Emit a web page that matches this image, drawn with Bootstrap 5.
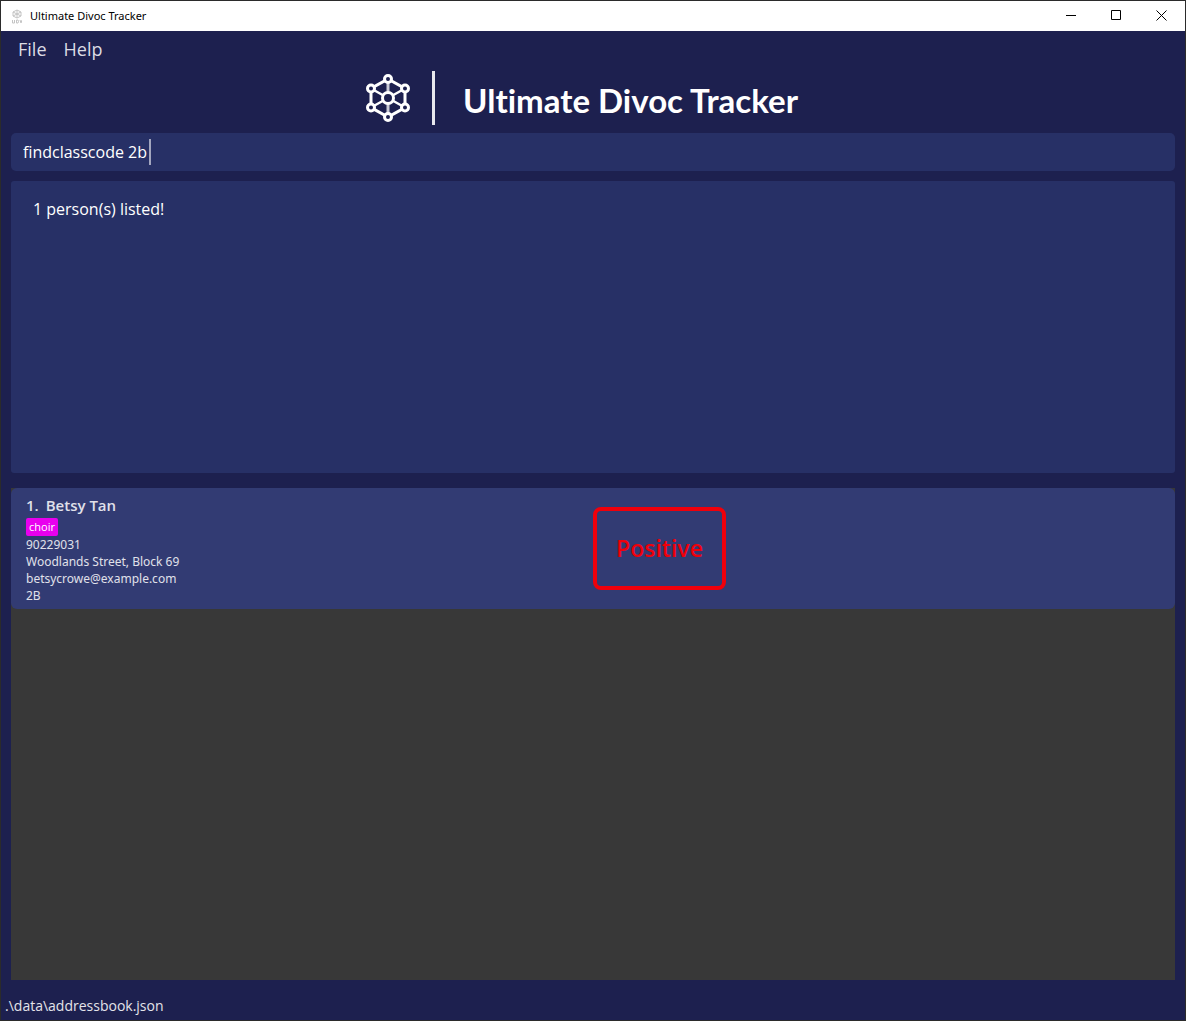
<!DOCTYPE html>
<html lang="en">
<head>
<meta charset="utf-8">
<meta name="viewport" content="width=device-width, initial-scale=1">
<title>Ultimate Divoc Tracker</title>
<link href="https://cdn.jsdelivr.net/npm/bootstrap@5.3.0/dist/css/bootstrap.min.css" rel="stylesheet">
<style>
  body { font-family: "Open Sans", "Noto Sans", sans-serif; background: #1d204f; color: #fff; }
  .app-window { border: 1px solid #2b2b2b; }
  .title-bar { height: 30px; background: #fff; color: #000; }
  .title-bar h1 { font-family: "Noto Sans", sans-serif; font-size: 11px; line-height: 16px; }
  .app-icon { margin: 0 8px 0 11px; }
  .win-btn { width: 45px; height: 30px; border: 0; background: none; padding: 0; }
  .win-btn svg { margin: 0 auto 2px; }
  .win-buttons { padding-right: 1px; }
  .menu-link { font-size: 18px; line-height: 36px; color: #dcdce4; text-decoration: none; }
  .menu-bar { padding-left: 17px; gap: 17px; height: 36px; }
  .brand { height: 66px; padding: 4px 22px 8px 0; }
  .brand-rule { width: 3px; height: 54px; background: #e8e8ee; margin: 0 28px 0 22px; }
  .brand-name { font-family: Lato, "Open Sans", sans-serif; font-size: 33px; line-height: 48px; font-weight: 700; font-variant-ligatures: none; padding-top: 4px; }
  .main-area { padding: 0 10px; }
  .command, .command:focus { height: 38px; border: 0; border-radius: 5px; background: #273066; color: #fff; font-size: 16px; padding: 6px 12px; box-shadow: none; caret-color: transparent; }
  .caret { left: 138px; top: 6px; width: 2px; height: 26px; background: #a3a6bf; }
  .result { height: 292px; margin: 10px 0 15px; border-radius: 3px; background: #273066; padding: 16px 22px; font-size: 16px; line-height: 24px; }
  .person { background: #323b73; border-radius: 6px; color: #e0e1ea; font-family: "Noto Sans", "Open Sans", sans-serif; font-size: 12px; line-height: 17px; }
  .person-info { padding: 6px 15px 5px; }
  .person-name { font-family: "Open Sans", sans-serif; font-size: 15px; line-height: 22px; font-weight: 600; margin: 0; gap: 7px; }
  .tag { background: #e800ee; color: #fff; border-radius: 2px; font-family: "Open Sans", sans-serif; font-size: 11px; line-height: 16px; padding: 1px 3px; margin: 2px 0 0; height: 18px; display: block; width: fit-content; }
  .status { border: 4px solid #f0000b; border-radius: 8px; color: #f0000b; width: 133px; height: 83px; font-family: "Open Sans", sans-serif; font-size: 23px; font-weight: 600; }
  .list-area { background: #383838; }
  .status-bar { height: 40px; padding: 14px 4px 0; font-size: 14px; line-height: 24px; color: #e4e4ea; }
</style>
</head>
<body>
<div class="app-window d-flex flex-column min-vh-100">
  <header class="title-bar d-flex align-items-center">
    <svg class="app-icon" width="10" height="15" viewBox="0 0 10 15" fill="none" stroke="#c4c4c4" aria-hidden="true">
      <path d="M5 1 9 3v4L5 9 1 7V3zM5 1v8M1 3l8 4M9 3 1 7"/><path d="M.5 11v3h2v-3M4.500 11v3h1.500l.5-1.500L6 11zM8 11l1 3 1-3"/>
    </svg>
    <h1 class="m-0 fw-normal">Ultimate Divoc Tracker</h1>
    <div class="win-buttons ms-auto d-flex">
      <button class="win-btn" type="button" aria-label="Minimize"><svg class="d-block" width="11" height="11" stroke="#000"><path d="M0 5.500h10"/></svg></button>
      <button class="win-btn" type="button" aria-label="Maximize"><svg class="d-block" width="11" height="11" fill="none" stroke="#000"><path d="M.5.500h9v9h-9z"/></svg></button>
      <button class="win-btn" type="button" aria-label="Close"><svg class="d-block" width="11" height="11" stroke="#000"><path d="m.5.500 10 10m0-10-10 10"/></svg></button>
    </div>
  </header>
  <nav class="menu-bar d-flex" aria-label="Menu">
    <a class="menu-link" href="#">File</a>
    <a class="menu-link" href="#">Help</a>
  </nav>
  <div class="brand d-flex justify-content-center align-items-center">
    <svg width="44" height="50" viewBox="-22 -25 44 50" fill="none" stroke="#fff" stroke-width="3" aria-hidden="true">
      <path d="M0-19 17-9.500v19L0 19-17 9.500v-19z"/>
      <path d="M-17-9.500 17 9.500M17-9.500-17 9.500" stroke-width="2.500"/>
      <path d="M0-19V19" stroke="#c9cad6"/>
      <g fill="#1d204f"><circle r="5.500"/><circle cy="-19" r="3.500"/><circle cy="19" r="3.500"/><circle cx="-17" cy="-9.500" r="3.500"/><circle cx="17" cy="-9.500" r="3.500"/><circle cx="-17" cy="9.500" r="3.500"/><circle cx="17" cy="9.500" r="3.500"/></g>
    </svg>
    <div class="brand-rule"></div>
    <div class="brand-name">Ultimate Divoc Tracker</div>
  </div>
  <main class="main-area flex-grow-1 d-flex flex-column">
    <div class="position-relative">
      <input class="form-control command" type="text" aria-label="Command" value="findclasscode 2b">
      <span class="caret position-absolute"></span>
    </div>
    <div class="result" role="status">1 person(s) listed!</div>
    <div class="list-area flex-grow-1">
      <article class="person row g-0 align-items-center">
        <div class="col-6 person-info">
          <h2 class="person-name d-flex"><span>1.</span><span>Betsy Tan</span></h2>
          <span class="tag">choir</span>
          <div>90229031</div>
          <div>Woodlands Street, Block 69</div>
          <div>betsycrowe@example.com</div>
          <div>2B</div>
        </div>
        <div class="col-6"><div class="status d-flex align-items-center justify-content-center">Positive</div></div>
      </article>
    </div>
  </main>
  <footer class="status-bar">.\data\addressbook.json</footer>
</div>
<script src="https://cdn.jsdelivr.net/npm/bootstrap@5.3.0/dist/js/bootstrap.bundle.min.js"></script>
</body>
</html>
